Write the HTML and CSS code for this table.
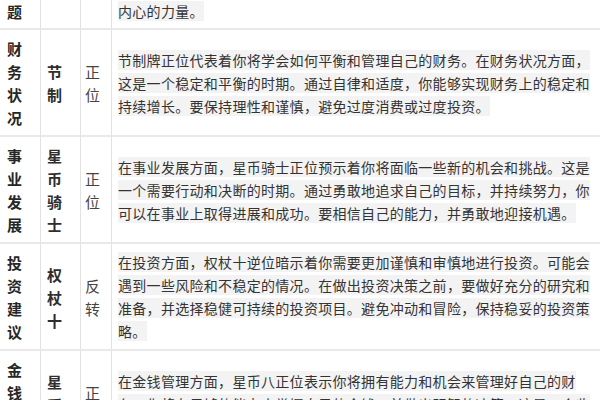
FILE: index.html
```html
<!DOCTYPE html>
<html lang="zh">
<head>
<meta charset="utf-8">
<link rel="stylesheet" href="styles.css">
</head>
<body>
<div class="grid">
  <div class="cell c1 first">题</div>
  <div class="cell c2 first"></div>
  <div class="cell c3 first"></div>
  <div class="cell c4 first"><p class="txt"><span class="hl">内心的力量。</span></p></div>

  <div class="cell c1">财务状况</div>
  <div class="cell c2">节制</div>
  <div class="cell c3">正位</div>
  <div class="cell c4"><p class="txt"><span class="hl">节制牌正位代表着你将学会如何平衡和管理自己的财务。在财务状况方面，这是一个稳定和平衡的时期。通过自律和适度，你能够实现财务上的稳定和持续增长。要保持理性和谨慎，避免过度消费或过度投资。</span></p></div>

  <div class="cell c1">事业发展</div>
  <div class="cell c2">星币骑士</div>
  <div class="cell c3">正位</div>
  <div class="cell c4"><p class="txt"><span class="hl">在事业发展方面，星币骑士正位预示着你将面临一些新的机会和挑战。这是一个需要行动和决断的时期。通过勇敢地追求自己的目标，并持续努力，你可以在事业上取得进展和成功。要相信自己的能力，并勇敢地迎接机遇。</span></p></div>

  <div class="cell c1">投资建议</div>
  <div class="cell c2">权杖十</div>
  <div class="cell c3">反转</div>
  <div class="cell c4"><p class="txt"><span class="hl">在投资方面，权杖十逆位暗示着你需要更加谨慎和审慎地进行投资。可能会遇到一些风险和不稳定的情况。在做出投资决策之前，要做好充分的研究和准备，并选择稳健可持续的投资项目。避免冲动和冒险，保持稳妥的投资策略。</span></p></div>

  <div class="cell c1">金钱管理</div>
  <div class="cell c2">星币八</div>
  <div class="cell c3">正位</div>
  <div class="cell c4"><p class="txt"><span class="hl">在金钱管理方面，星币八正位表示你将拥有能力和机会来管理好自己的财务。你将有足够的能力来掌握自己的金钱，并做出明智的决策。这是一个收获和积累的时期。</span></p></div>
</div>
</body>
</html>
```

FILE: styles.css
```css
html, body {
  margin: 0;
  padding: 0;
  background: #ffffff;
  overflow: hidden;
}

body {
  width: 600px;
  height: 400px;
  font-family: "Noto Sans CJK SC", "Noto Sans", sans-serif;
}

.grid {
  display: grid;
  grid-template-columns: 41px 40px 31px 1fr;
  width: 600px;
}

.cell {
  box-sizing: border-box;
  display: flex;
  align-items: center;
  border-right: 1px solid #e2e2e2;
  border-bottom: 2px solid #e9e9e9;
  padding-top: 7px;
  padding-bottom: 6px;
  line-height: 23px;
  min-height: 107px;
}

.cell.first {
  min-height: 0;
  padding-top: 0;
  padding-bottom: 5px;
  align-items: flex-end;
}

.c1 {
  padding-left: 7px;
  padding-right: 7px;
  font-size: 15px;
  font-weight: 700;
  color: #262626;
}

.c2 {
  padding-left: 6px;
  padding-right: 6px;
  font-size: 15px;
  font-weight: 700;
  color: #2e2e2e;
}

.c3 {
  padding-left: 4px;
  padding-right: 4px;
  font-size: 15px;
  color: #444444;
}

.c4 {
  padding-left: 6px;
  padding-right: 4px;
  border-right: none;
  font-size: 14px;
  letter-spacing: 0.3px;
  color: #333333;
}

.txt {
  margin: 0;
}

.hl {
  background: #f3f3f3;
}
```
